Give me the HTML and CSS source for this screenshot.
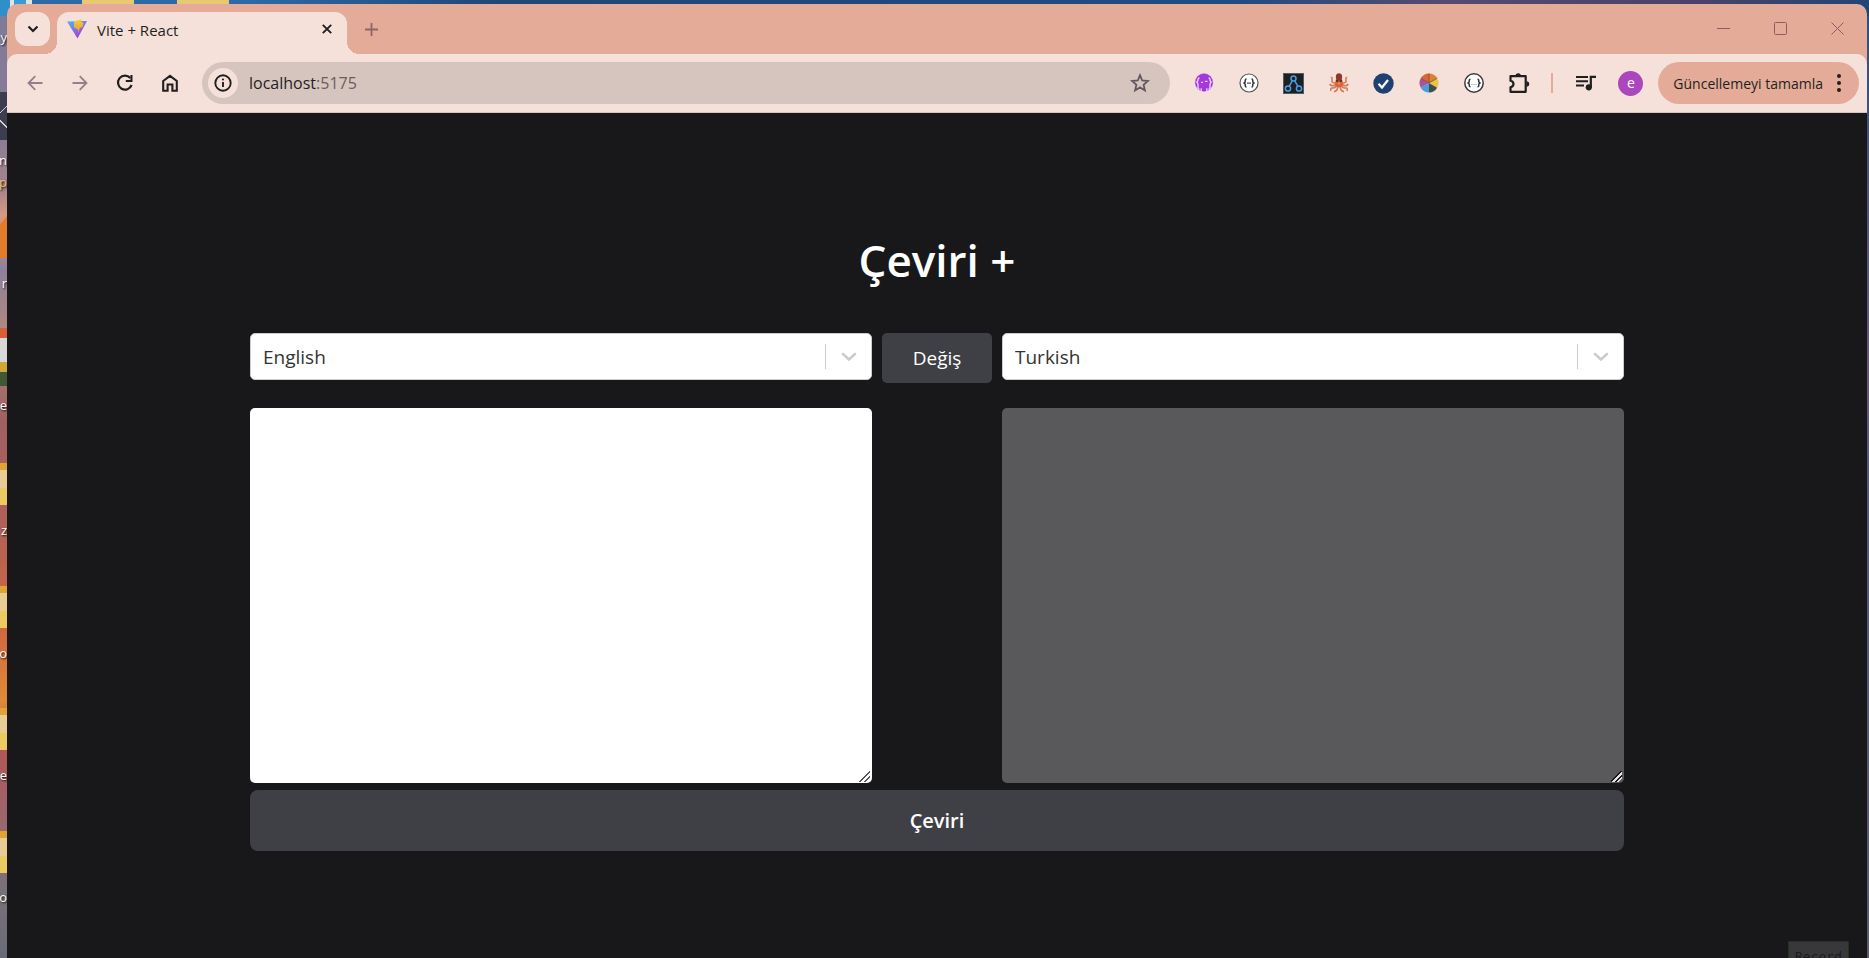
FILE: index.html
```html
<!DOCTYPE html>
<html lang="tr">
<head>
<meta charset="utf-8">
<title>Vite + React</title>
<link rel="stylesheet" href="styles.css">
</head>
<body>
<div class="desktop">
  <div class="shortcuts" aria-hidden="true">
    <span class="tile sky"></span>
    <span class="tile dark"></span>
    <span class="tile fox"></span>
    <span class="tile photo"></span>
    <span class="folder f1"></span>
    <span class="folder f2"></span>
    <span class="folder f3"></span>
    <span class="folder f4"></span>
    <span class="name n1">y</span>
    <span class="name n2">n</span>
    <span class="name n3">p</span>
    <span class="name n4">r</span>
    <span class="name n5">e</span>
    <span class="name n6">z</span>
    <span class="name n7">o</span>
    <span class="name n8">e</span>
    <span class="name n9">Po</span>
  </div>

  <div class="window">
    <header class="tabstrip">
      <button class="tab-search" aria-label="Sekme ara">
        <svg width="12" height="8" viewBox="0 0 12 8"><path d="M1.500 1.500 6 6l4.500-4.500" fill="none" stroke="#1f1f1f" stroke-width="2.200"/></svg>
      </button>
      <div class="tab">
        <svg class="vite" width="20" height="20" viewBox="0 0 20 20">
          <defs>
            <linearGradient id="v" x1="0" y1="0" x2="0.700" y2="1"><stop offset="0" stop-color="#4fb8ee"/><stop offset="1" stop-color="#a832e0"/></linearGradient>
            <linearGradient id="b" x1="0" y1="0" x2="0" y2="1"><stop offset="0" stop-color="#ecd24a"/><stop offset="1" stop-color="#e8952c"/></linearGradient>
          </defs>
          <path d="M0 2.500 20 2 10.500 19.500Z" fill="url(#v)"/>
          <path d="M7 2.500 14.500 0l-.5 2.500 2.500 1.500-1 4-2.500 1L10.800 14.500l.2-4L7 8.500Z" fill="url(#b)"/>
        </svg>
        <span class="tab-title">Vite + React</span>
        <button class="tab-close" aria-label="Kapat">
          <svg width="10" height="10" viewBox="0 0 10 10"><path d="m.8.8 8.400 8.400M9.200.8.8 9.200" stroke="#1f1f1f" stroke-width="1.900"/></svg>
        </button>
      </div>
      <button class="new-tab" aria-label="Yeni sekme">
        <svg width="13" height="13" viewBox="0 0 13 13"><path d="M6.500 0v13M0 6.500h13" stroke="#8c6666" stroke-width="1.800"/></svg>
      </button>
      <div class="window-buttons">
        <button aria-label="Simge durumuna küçült"><svg width="13" height="13" viewBox="0 0 13 13"><path d="M0 6.500h13" stroke="#8c5f5f"/></svg></button>
        <button aria-label="Ekranı kapla"><svg width="13" height="13" viewBox="0 0 13 13"><rect x=".5" y=".5" width="12" height="12" rx="1" fill="none" stroke="#8c5f5f"/></svg></button>
        <button aria-label="Pencereyi kapat"><svg width="13" height="13" viewBox="0 0 13 13"><path d="m.5.5 12 12m0-12-12 12" stroke="#8c5f5f"/></svg></button>
      </div>
    </header>

    <nav class="toolbar">
      <div class="nav-buttons">
        <button aria-label="Geri"><svg width="16" height="16" viewBox="0 0 16 16"><path d="M15.500 8H1.800M8.300 1.200 1.500 8l6.800 6.800" fill="none" stroke="#94808a" stroke-width="1.800"/></svg></button>
        <button aria-label="İleri"><svg width="16" height="16" viewBox="0 0 16 16"><path d="M.5 8h13.700M7.700 1.200 14.500 8l-6.800 6.800" fill="none" stroke="#94808a" stroke-width="1.800"/></svg></button>
        <button aria-label="Yenile"><svg width="18" height="18" viewBox="0 0 18 18"><path d="M14.300 4A7 7 0 1 0 15.600 11" fill="none" stroke="#1f1f1f" stroke-width="2.200"/><path d="M16.500 1v7H9.800V6h4.600V1Z" fill="#1f1f1f"/></svg></button>
        <button aria-label="Ana sayfa"><svg width="18" height="18" viewBox="0 0 18 18"><path d="M2.200 7 9 1.800 15.800 7v9.800h-4.400v-6.300H6.600v6.300H2.200Z" fill="none" stroke="#1f1f1f" stroke-width="2.100"/></svg></button>
      </div>
      <div class="omnibox">
        <button class="site-info" aria-label="Site bilgileri">
          <svg width="18" height="18" viewBox="0 0 18 18"><circle cx="9" cy="9" r="7.700" fill="none" stroke="#1f1f1f" stroke-width="1.900"/><path d="M9 8v5" stroke="#1f1f1f" stroke-width="1.900"/><circle cx="9" cy="5.500" r="1.100" fill="#1f1f1f"/></svg>
        </button>
        <a class="address" href="#">localhost<span class="port">:5175</span></a>
        <button class="bookmark" aria-label="Yer işareti">
          <svg width="20" height="20" viewBox="0 0 20 20"><path d="m10 2.200 2.200 5.300 5.700.5-4.300 3.800 1.300 5.600L10 14.400l-4.900 3 1.300-5.600L2.100 8l5.700-.5Z" fill="none" stroke="#62595e" stroke-width="1.800"/></svg>
        </button>
      </div>
      <div class="extensions">
        <button aria-label="Uzantı 1"><svg width="20" height="20" viewBox="0 0 20 20"><circle cx="10" cy="9.500" r="9.600" fill="#d8cdf0"/><circle cx="10" cy="9.500" r="8.900" fill="#a637d8"/><path d="M5.500 5Q4 5 4 6.500T2.800 9.300Q4 9.800 4 11.500v3.300q0 1.200 1.500 1.200M14.500 5Q16 5 16 6.500t1.200 2.800Q16 9.800 16 11.500v3.300q0 1.200-1.500 1.200" fill="none" stroke="#e8d5fa" stroke-width="1.400"/><path d="M7 9.300h2m2 -1h2.500M7.200 18.500v-3.300M12.800 18.500v-3.300" stroke="#e8d5fa" stroke-width="1.300"/></svg></button>
        <button aria-label="Uzantı 2"><svg width="20" height="20" viewBox="0 0 20 20"><circle cx="10" cy="10" r="9" fill="#fff" stroke="#555" stroke-width="1.200"/><path d="M7.500 6Q6.200 6 6.200 7.500V9L5 10l1.200 1v1.500Q6.200 14 7.500 14M12.500 6q1.300 0 1.300 1.500V9l1.200 1-1.200 1v1.500q0 1.500-1.300 1.500" fill="none" stroke="#333" stroke-width="1.500"/><path d="M8 10.200h4" stroke="#555" stroke-width="1.300"/></svg></button>
        <button aria-label="Uzantı 3"><svg width="21" height="21" viewBox="0 0 21 21"><rect x=".5" y=".5" width="20" height="20" fill="#1c2020" stroke="#555b62"/><g fill="none" stroke="#4a9ae8" stroke-width="1.500"><circle cx="10.500" cy="5.500" r="2.500"/><circle cx="5" cy="15.500" r="2.600"/><circle cx="16" cy="15.500" r="2.600"/><path d="m9.300 7.800-3.200 5.500m5.600-5.500 3.200 5.500"/></g></svg></button>
        <button aria-label="Uzantı 4"><svg width="20" height="20" viewBox="0 0 20 20"><path d="M7 6h6l1.500 6L12 14.500H8L5.500 12Z" fill="#d9663a"/><ellipse cx="10" cy="4" rx="3.200" ry="3.700" fill="#8f3a28"/><path d="M6 10Q2.500 10 3 7t-1.200-2.500M14 10q3.500 0 3-3t1.200-2.500M6 12q-3.500 2-5.300-1M14 12q3.500 2 5.300-1M7 13q-1 2.500-3.500 2T2 18M13 13q1 2.500 3.500 2T18 18M8.500 14q.5 3.500-3.500 4.800M11.500 14q-.5 3.500 3.500 4.800" fill="none" stroke="#d07850" stroke-width="1.500"/><path d="M7 8h2.200m1.600 0H13" stroke="#3a2520" stroke-width="1.500"/><circle cx="10" cy="10.500" r="1" fill="#e8a040"/></svg></button>
        <button aria-label="Uzantı 5"><svg width="21" height="21" viewBox="0 0 21 21"><circle cx="10.500" cy="10.500" r="10.200" fill="#1f416f"/><path d="m5.500 10.800 3.500 3.700 6-7.500" fill="none" stroke="#fff" stroke-width="2.200"/></svg></button>
        <button aria-label="Uzantı 6"><svg width="20" height="20" viewBox="-10 -10 20 20"><path d="M0 0V-9.500A9.500 9.500 0 0 1 8.200-4.750Z" fill="#e08030"/><path d="M0 0 8.200-4.750A9.500 9.500 0 0 1 8.200 4.750Z" fill="#e8c545"/><path d="M0 0 8.200 4.750A9.500 9.500 0 0 1 0 9.500Z" fill="#3c5048"/><path d="M0 0V9.500A9.500 9.500 0 0 1-8.200 4.750Z" fill="#4a9ee0"/><path d="M0 0-8.200 4.750A9.500 9.500 0 0 1-8.200-4.750Z" fill="#a8569c"/><path d="M0 0-8.200-4.750A9.500 9.500 0 0 1 0-9.500Z" fill="#d9663a"/><path d="M0 0v-9.500M0 0-8.200-4.750M0 0l8.200-4.750" stroke="#704030" stroke-width=".7"/></svg></button>
        <button aria-label="Uzantı 7"><svg width="20" height="20" viewBox="0 0 20 20"><circle cx="10" cy="10" r="9.200" fill="#fff" stroke="#3a3a3e" stroke-width="1.500"/><path d="M6.500 6.200Q5.200 6.200 5.200 7.500V9L4 10l1.200 1v1.500q0 1.300 1.300 1.300M13.500 6.200q1.300 0 1.300 1.300V9l1.200 1-1.200 1v1.500q0 1.300-1.300 1.300" fill="none" stroke="#333" stroke-width="1.500"/><path d="M7.500 11.500h5" stroke="#999" stroke-dasharray="1 1"/></svg></button>
        <button aria-label="Uzantılar"><svg width="22" height="22" viewBox="0 0 22 22"><path d="M2.500 4.200h15.200v15.600H2.500v-4.600q3-.7 3-3.200t-3-3.200Z" fill="none" stroke="#1f1f1f" stroke-width="2.200" stroke-linejoin="round"/><path d="M7.500 4a2.700 2.700 0 0 1 5.400 0ZM18.500 9.300a2.700 2.700 0 0 1 0 5.400Z" fill="#1f1f1f"/></svg></button>
      </div>
      <span class="divider"></span>
      <div class="profile">
        <button aria-label="Medya"><svg width="20" height="16" viewBox="0 0 20 16"><path d="M0 2h12M0 6.200h12M0 10.400h8" stroke="#1f1f1f" stroke-width="2"/><path d="M14.800 12V1.800H20" fill="none" stroke="#1f1f1f" stroke-width="2.200"/><circle cx="12.800" cy="12.300" r="3.100" fill="#1f1f1f"/></svg></button>
        <button aria-label="Profil"><span class="avatar">e</span></button>
      </div>
      <button class="update">Güncellemeyi tamamla
        <svg width="4" height="18" viewBox="0 0 4 18"><g fill="#1f1f1f"><circle cx="2" cy="2" r="2"/><circle cx="2" cy="9" r="2"/><circle cx="2" cy="16" r="2"/></g></svg>
      </button>
    </nav>

    <main class="page">
      <h1 class="title">Çeviri +</h1>
      <div class="translator">
        <div class="picker">
          <select class="language" aria-label="Kaynak dil"><option>English</option><option>Turkish</option></select>
          <span class="indicator"><svg width="16" height="10" viewBox="0 0 16 10"><path d="m2 2 6 5.500L14 2" fill="none" stroke="#ccc" stroke-width="2.600" stroke-linecap="round"/></svg></span>
        </div>
        <button class="swap">Değiş</button>
        <div class="picker">
          <select class="language" aria-label="Hedef dil"><option>Turkish</option><option>English</option></select>
          <span class="indicator"><svg width="16" height="10" viewBox="0 0 16 10"><path d="m2 2 6 5.500L14 2" fill="none" stroke="#ccc" stroke-width="2.600" stroke-linecap="round"/></svg></span>
        </div>
        <textarea class="text source" aria-label="Metin"></textarea>
        <textarea class="text result" aria-label="Çeviri sonucu" disabled></textarea>
        <button class="submit">Çeviri</button>
      </div>
    </main>
  </div>
  <button class="record">Record</button>
</div>
</body>
</html>
```

FILE: styles.css
```css
* { box-sizing: border-box; }

body {
  margin: 0;
  font-family: "Open Sans", "Noto Sans", sans-serif;
}

button {
  border: 0;
  padding: 0;
  background: none;
  font-family: inherit;
  color: inherit;
  display: flex;
  align-items: center;
  justify-content: center;
}

svg { display: block; flex: none; }

.desktop {
  position: relative;
  display: flex;
  height: 100vh;
  padding: 4px 2px 0 7px;
  overflow: hidden;
  background:
    linear-gradient(90deg, transparent 82px, #e8c870 82px 134px, transparent 134px 177px, #e8c870 177px 229px, transparent 229px) 0 0 / 100% 4px no-repeat,
    linear-gradient(90deg, #2a6aa8 0 250px, #1f4678 500px, #1f4c84 1240px, #564a70 1440px, #4a4268 1700px, #1f4678) 0 0 / 100% 16px no-repeat,
    linear-gradient(#7d7a98 0, #8a7c98 140px, #a88488 190px, #d89a80 215px, #90809c 270px, #b08880 330px, #a06060 420px, #b06058 520px, #d06840 630px, #e08a38 700px, #b05858 750px, #986870 830px, #7a7078 890px, #686c78 958px) 0 0 / 7px 100% no-repeat,
    linear-gradient(#30507c 0, #6a5a78 40%, #50587c 52%, #5c5c68 100%) 100% 0 / 2px 100% no-repeat;
}

/* Desktop icons, placed freely behind the window */
.shortcuts {
  position: absolute;
  inset: 0 auto 0 0;
  width: 14px;
}

.tile, .folder, .name { position: absolute; left: 0; }
.tile { width: 7px; }
.sky { top: 0; height: 16px; width: 32px; background: linear-gradient(90deg, #2f8fc8 0 10px, #dde4e8 10px 14px, #3a9ad4 14px 26px, #dde4e8 26px); }
.dark { top: 92px; height: 48px; background: linear-gradient(135deg, transparent 0 48%, #d8d8dc 48% 54%, transparent 54%) 0 12px / 7px 10px no-repeat, linear-gradient(45deg, transparent 0 44%, #d8d8dc 44% 54%, transparent 54%) 0 28px / 7px 8px no-repeat, #3c3e50; }
.fox { top: 216px; height: 42px; background: #e07c2c; clip-path: polygon(100% 0, 100% 100%, 0 100%, 0 20%); }
.photo { top: 328px; height: 58px; background: linear-gradient(#d86038 0 10px, #d8d8d8 10px 34px, #d0a838 34px 44px, #405838 44px); }

.folder {
  width: 7px;
  height: 42px;
  background: linear-gradient(#e0a436 0 7px, #e8cc94 7px 25px, #ecca62 25px);
}
.f1 { top: 463px; }
.f2 { top: 586px; }
.f3 { top: 708px; }
.f4 { top: 831px; }

.name {
  width: 7px;
  overflow: hidden;
  display: flex;
  justify-content: flex-end;
  font-size: 13px;
  line-height: 20px;
  color: #fff;
  text-shadow: 1px 1px 2px #000;
}
.n1 { top: 27px; }
.n2 { top: 150px; }
.n3 { top: 172px; color: #f0c080; }
.n4 { top: 273px; }
.n5 { top: 395px; }
.n6 { top: 520px; }
.n7 { top: 643px; }
.n8 { top: 765px; }
.n9 { top: 887px; }

.window {
  position: relative;
  flex: 1;
  display: flex;
  flex-direction: column;
  border-radius: 10px 10px 0 0;
  overflow: hidden;
  background: #e4ab99;
}

.tabstrip {
  display: flex;
  height: 50px;
  padding-left: 8px;
}

.tab-search {
  width: 35px;
  height: 34px;
  margin-top: 8px;
  border-radius: 12px;
  background: #f6e1da;
}

.tab {
  position: relative;
  display: flex;
  align-items: center;
  width: 290px;
  margin: 8px 0 0 7px;
  padding: 0 15px 8px 10px;
  border-radius: 12px 12px 0 0;
  background: #f6e1da;
  color: #1f1f1f;
}

.tab::before, .tab::after {
  content: "";
  position: absolute;
  bottom: 0;
  width: 12px;
  height: 12px;
}
.tab::before { right: 100%; background: radial-gradient(circle at 0 0, transparent 12px, #f6e1da 12px); }
.tab::after { left: 100%; background: radial-gradient(circle at 100% 0, transparent 12px, #f6e1da 12px); }

.tab-title {
  flex: 1;
  padding: 2px 0 0 10px;
  font-size: 15px;
  line-height: 20px;
}

.new-tab { width: 49px; height: 50px; }

.window-buttons {
  display: flex;
  margin-left: auto;
  padding-right: 1px;
}
.window-buttons button { width: 57px; height: 49px; }

.toolbar {
  display: flex;
  align-items: center;
  height: 59px;
  padding: 0 8px 0 5px;
  border-bottom: 1px solid #d8c4bc;
  border-radius: 10px 10px 0 0;
  background: #f6e1da;
}

.nav-buttons, .extensions, .profile { display: flex; }
.nav-buttons button, .extensions button, .profile button { width: 45px; height: 42px; }

.omnibox {
  flex: 1;
  display: flex;
  align-items: center;
  height: 42px;
  margin: 0 11px 0 10px;
  padding: 0 20px 0 6px;
  border-radius: 21px;
  background: #d6c5be;
}

.site-info {
  width: 30px;
  height: 30px;
  border-radius: 50%;
  background: #f6e1da;
}

.address {
  flex: 1;
  padding-left: 11px;
  font-size: 16px;
  line-height: 24px;
  color: #1f1f1f;
  text-decoration: none;
}
.port { color: #6b5c60; }

.divider {
  width: 2px;
  height: 20px;
  margin: 0 10px;
  background: #e4ab99;
}

.avatar {
  width: 25px;
  height: 25px;
  border-radius: 50%;
  background: #ab47bc;
  color: #fff;
  font-size: 14px;
  line-height: 24px;
  text-align: center;
}

.update {
  gap: 14px;
  height: 42px;
  margin-left: 5px;
  padding: 0 18px 0 15px;
  border-radius: 21px;
  background: #e4ab99;
  color: #1f1f1f;
  font-size: 14px;
}

.page {
  flex: 1;
  padding: 119px 24px 0;
  background: #18181b;
  color: #fff;
}

.title {
  margin: 0 0 45px;
  font-size: 44px;
  line-height: 56px;
  font-weight: 600;
  text-align: center;
}

.translator {
  display: grid;
  grid-template-columns: 1fr 110px 1fr;
  column-gap: 10px;
  align-items: start;
  max-width: 1374px;
  margin: 0 auto;
}

.picker { display: grid; }
.picker > * { grid-area: 1 / 1; }

.language {
  appearance: none;
  height: 47px;
  padding: 0 70px 0 12px;
  border: 1px solid #ccc;
  border-radius: 5px;
  background: #fff;
  color: #333;
  font-family: inherit;
  font-size: 19px;
}

.indicator {
  justify-self: end;
  align-self: center;
  display: flex;
  align-items: center;
  height: 25px;
  padding: 0 15px;
  border-left: 1px solid #ccc;
  pointer-events: none;
}

.swap {
  height: 50px;
  border-radius: 5px;
  background: #3f3f46;
  font-size: 19px;
}

.text {
  width: 100%;
  height: 375px;
  margin-top: 25px;
  padding: 10px;
  border: 0;
  border-radius: 5px;
  background: #fff;
  font-family: inherit;
  font-size: 18px;
}
.source { grid-column: 1; }
.result { grid-column: 3; background: #59595b; }

.text::-webkit-resizer {
  background: linear-gradient(135deg, transparent 0 49%, #555 49% 57%, transparent 57% 71%, #555 71% 79%, transparent 79%) 2px 3px / 11px 11px no-repeat;
}
.result::-webkit-resizer {
  background: linear-gradient(135deg, transparent 0 45%, #18181b 45% 53%, #e8e0e0 53% 64%, #18181b 64% 74%, #e8e0e0 74% 82%, transparent 82%) 2px 3px / 11px 11px no-repeat;
}

.submit {
  grid-column: 1 / -1;
  height: 61px;
  margin-top: 7px;
  border-radius: 8px;
  background: #3f3f46;
  font-size: 20px;
  font-weight: 600;
}

/* Recorder control floating over the corner of the window */
.record {
  position: absolute;
  right: 20px;
  bottom: -14px;
  width: 61px;
  height: 31px;
  border: 1px solid #243024;
  background: #38383a;
  color: #1c1c1e;
  font-family: "DejaVu Sans Mono", monospace;
  font-size: 13px;
}
```
